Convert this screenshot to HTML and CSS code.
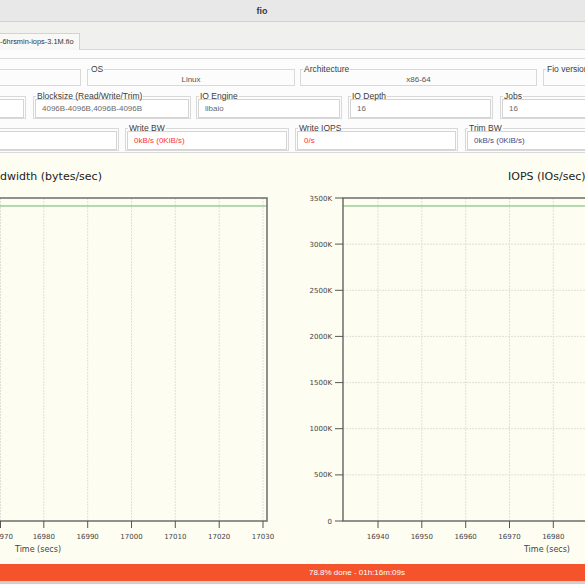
FILE: index.html
```html
<!DOCTYPE html>
<html lang="en">
<head>
  <meta charset="UTF-8">
  <meta name="viewport" content="width=device-width, initial-scale=1.0">
  <title>fio</title>
  <link rel="stylesheet" href="styles.css">
</head>
<body>

  <div class="titlebar"><span>fio</span></div>

  <div class="tabs">
    <div class="tab">-6hrsmin-iops-3.1M.fio</div>
  </div>

  <div class="page">
    <div class="info">
      <!-- host info -->
      <div class="row row1">
        <fieldset class="box host"><legend>&nbsp;</legend><div class="plain"></div></fieldset>
        <fieldset class="box os"><legend>OS</legend><div class="plain">Linux</div></fieldset>
        <fieldset class="box arch"><legend>Architecture</legend><div class="plain">x86-64</div></fieldset>
        <fieldset class="box ver"><legend>Fio version</legend><div class="plain"></div></fieldset>
      </div>
      <!-- job options -->
      <div class="row row2">
        <fieldset class="box rw"><legend>&nbsp;</legend><div class="entry"></div></fieldset>
        <fieldset class="box bs"><legend>Blocksize (Read/Write/Trim)</legend><div class="entry">4096B-4096B,4096B-4096B</div></fieldset>
        <fieldset class="box engine"><legend>IO Engine</legend><div class="entry">libaio</div></fieldset>
        <fieldset class="box depth"><legend>IO Depth</legend><div class="entry">16</div></fieldset>
        <fieldset class="box jobs"><legend>Jobs</legend><div class="entry">16</div></fieldset>
      </div>
      <!-- live stats -->
      <div class="row row3">
        <fieldset class="box rbw"><legend>&nbsp;</legend><div class="entry"></div></fieldset>
        <fieldset class="box wbw"><legend>Write BW</legend><div class="entry red">0kB/s (0KiB/s)</div></fieldset>
        <fieldset class="box wiops"><legend>Write IOPS</legend><div class="entry red">0/s</div></fieldset>
        <fieldset class="box tbw"><legend>Trim BW</legend><div class="entry blue">0kB/s (0KiB/s)</div></fieldset>
      </div>
    </div>
  </div>

  <div class="charts">
    <svg class="plot" width="292" height="410" viewBox="0 0 292 410">
      <text class="title" x="0" y="26">dwidth (bytes/sec)</text>
      <g class="grid">
        <line x1="0.5" y1="44" x2="0.5" y2="367"/>
        <line x1="43.8" y1="44" x2="43.8" y2="367"/>
        <line x1="87.7" y1="44" x2="87.7" y2="367"/>
        <line x1="131.5" y1="44" x2="131.5" y2="367"/>
        <line x1="175.3" y1="44" x2="175.3" y2="367"/>
        <line x1="219.2" y1="44" x2="219.2" y2="367"/>
        <line x1="263" y1="44" x2="263" y2="367"/>
      </g>
      <line class="series" x1="0" y1="52" x2="267" y2="52"/>
      <path class="frame" d="M0 44 H267 V367 H0"/>
      <g class="ticks">
        <line x1="0.5" y1="367" x2="0.5" y2="374"/>
        <line x1="43.8" y1="367" x2="43.8" y2="374"/>
        <line x1="87.7" y1="367" x2="87.7" y2="374"/>
        <line x1="131.5" y1="367" x2="131.5" y2="374"/>
        <line x1="175.3" y1="367" x2="175.3" y2="374"/>
        <line x1="219.2" y1="367" x2="219.2" y2="374"/>
        <line x1="263" y1="367" x2="263" y2="374"/>
      </g>
      <g class="xlabels">
        <text class="first" x="-0.5" y="384.5">970</text>
        <text x="43.8" y="384.5">16980</text>
        <text x="87.7" y="384.5">16990</text>
        <text x="131.5" y="384.5">17000</text>
        <text x="175.3" y="384.5">17010</text>
        <text x="219.2" y="384.5">17020</text>
        <text x="263" y="384.5">17030</text>
      </g>
      <text class="axis-name" x="38" y="398" text-anchor="middle">Time (secs)</text>
    </svg>

    <svg class="plot" width="293" height="410" viewBox="0 0 293 410">
      <text class="title" x="216" y="26">IOPS (IOs/sec)</text>
      <g class="grid">
        <line x1="51" y1="90.1" x2="293" y2="90.1"/>
        <line x1="51" y1="136.3" x2="293" y2="136.3"/>
        <line x1="51" y1="182.4" x2="293" y2="182.4"/>
        <line x1="51" y1="228.6" x2="293" y2="228.6"/>
        <line x1="51" y1="274.7" x2="293" y2="274.7"/>
        <line x1="51" y1="320.9" x2="293" y2="320.9"/>
        <line x1="86" y1="44" x2="86" y2="367"/>
        <line x1="129.8" y1="44" x2="129.8" y2="367"/>
        <line x1="173.7" y1="44" x2="173.7" y2="367"/>
        <line x1="217.5" y1="44" x2="217.5" y2="367"/>
        <line x1="261.3" y1="44" x2="261.3" y2="367"/>
      </g>
      <line class="series" x1="51" y1="52" x2="293" y2="52"/>
      <path class="frame" d="M293 44 H51 V367 H293"/>
      <g class="ticks">
        <line x1="43" y1="44" x2="51" y2="44"/>
        <line x1="43" y1="90.1" x2="51" y2="90.1"/>
        <line x1="43" y1="136.3" x2="51" y2="136.3"/>
        <line x1="43" y1="182.4" x2="51" y2="182.4"/>
        <line x1="43" y1="228.6" x2="51" y2="228.6"/>
        <line x1="43" y1="274.7" x2="51" y2="274.7"/>
        <line x1="43" y1="320.9" x2="51" y2="320.9"/>
        <line x1="43" y1="367" x2="51" y2="367"/>
        <line x1="86" y1="367" x2="86" y2="374"/>
        <line x1="129.8" y1="367" x2="129.8" y2="374"/>
        <line x1="173.7" y1="367" x2="173.7" y2="374"/>
        <line x1="217.5" y1="367" x2="217.5" y2="374"/>
        <line x1="261.3" y1="367" x2="261.3" y2="374"/>
      </g>
      <g class="ylabels">
        <text x="40" y="46.5">3500K</text>
        <text x="40" y="92.6">3000K</text>
        <text x="40" y="138.8">2500K</text>
        <text x="40" y="184.9">2000K</text>
        <text x="40" y="231.1">1500K</text>
        <text x="40" y="277.2">1000K</text>
        <text x="40" y="323.4">500K</text>
        <text x="40" y="369.5">0</text>
      </g>
      <g class="xlabels">
        <text x="86" y="384.5">16940</text>
        <text x="129.8" y="384.5">16950</text>
        <text x="173.7" y="384.5">16960</text>
        <text x="217.5" y="384.5">16970</text>
        <text x="261.3" y="384.5">16980</text>
      </g>
      <text class="axis-name" x="278" y="398" text-anchor="end">Time (secs)</text>
    </svg>
  </div>

  <div class="progress">78.8% done - 01h:16m:09s</div>

</body>
</html>
```

FILE: styles.css
```css
html, body {
  margin: 0;
  padding: 0;
}

body {
  width: 585px;
  height: 585px;
  overflow: hidden;
  background-color: #fcfcfc;
  color: #3c3c3c;
  font-family: 'Liberation Sans', Arial, sans-serif;
}

.titlebar {
  height: 21px;
  border-bottom: 1px solid #d2d2d2;
  background-color: #e8e8e8;
  display: flex;
  align-items: center;
  justify-content: center;
  padding-right: 61px;
  font-size: 9px;
  font-weight: bold;
  color: #3a3a3a;
}

.tabs {
  height: 27px;
  border-bottom: 1px solid #d6d6d6;
  background-color: #f0f0ef;
  display: flex;
  align-items: flex-end;
}

.tab {
  width: 79px;
  height: 15px;
  border-top: 1px solid #d2d2d2;
  border-right: 1px solid #d2d2d2;
  background-color: #f8f8f7;
  font-size: 7.4px;
  line-height: 15px;
  color: #333;
  white-space: nowrap;
  overflow: hidden;
  margin-bottom: -1px;
  padding-bottom: 1px;
}

.page {
  height: 104px;
  overflow: hidden;
  padding-top: 8px;
  box-sizing: border-box;
}

.info {
  border-top: 1px solid #dadada;
  border-bottom: 1px solid #dadada;
  padding: 5px 0 1px;
}

.row {
  display: flex;
  margin-left: -60px;
}

.row2 { margin-top: 6px; }
.row3 { margin-top: 5px; }

.box {
  margin: 0;
  padding: 0 1px 0;
  border: 1px solid #d9d9d9;
  box-sizing: border-box;
  min-width: 0;
  flex: none;
}

.box legend {
  padding: 0 1px;
  margin-left: 1px;
  font-size: 8.5px;
  line-height: 10px;
  color: #3c3c3c;
  white-space: nowrap;
}

.row2 .box legend,
.row3 .box legend {
  line-height: 8px;
}

.plain {
  height: 9px;
  line-height: 9px;
  margin-top: 1px;
  margin-bottom: 1px;
  text-align: center;
  font-size: 8px;
  color: #555;
}

.entry {
  height: 19px;
  margin-top: -1px;
  border: 1px solid #d4d4d4;
  background-color: #fff;
  box-sizing: border-box;
  padding-left: 6px;
  font-size: 8px;
  line-height: 17px;
  color: #6a6a6a;
  white-space: nowrap;
  overflow: hidden;
}

.entry.red { color: #ff3434; }
.entry.blue { color: #4a4a80; }

/* row widths, first box runs off the left edge */
.host { width: 141px; margin-right: 6px; }
.os { width: 208px; margin-right: 5px; }
.arch { width: 237px; margin-right: 6px; }
.ver { width: 100px; }

.rw { width: 86px; margin-right: 7px; }
.bs { width: 158px; margin-right: 5px; }
.engine { width: 146px; margin-right: 6px; }
.depth { width: 145px; margin-right: 7px; }
.jobs { width: 100px; }

.rbw { width: 179px; margin-right: 6px; }
.wbw { width: 164px; margin-right: 6px; }
.wiops { width: 163px; margin-right: 7px; }
.tbw { width: 140px; }

.charts {
  height: 410px;
  background-color: #fdfdf1;
  display: flex;
}

.plot {
  display: block;
  flex: none;
  font-family: 'DejaVu Sans', sans-serif;
}

.plot .title {
  font-size: 11px;
  fill: #222;
}

.plot .grid line {
  stroke: #e0e0d8;
  stroke-width: 1;
  stroke-dasharray: 2 1;
}

.plot .series {
  stroke: #6fb86f;
  stroke-width: 1.2;
}

.plot .frame {
  fill: none;
  stroke: #6c6c6c;
  stroke-width: 1.5;
}

.plot .ticks line {
  stroke: #555;
  stroke-width: 1;
}

.plot .xlabels text {
  font-size: 7px;
  fill: #444;
  text-anchor: middle;
}

.plot .xlabels .first {
  text-anchor: start;
}

.plot .ylabels text {
  font-size: 7px;
  fill: #444;
  text-anchor: end;
}

.plot .axis-name {
  font-size: 8px;
  fill: #444;
}

.progress {
  height: 17px;
  border-bottom: 3px solid #cfcfcf;
  background-color: #f4532c;
  color: #fff;
  font-size: 8px;
  display: flex;
  align-items: center;
  justify-content: center;
  padding-left: 129px;
}
```
